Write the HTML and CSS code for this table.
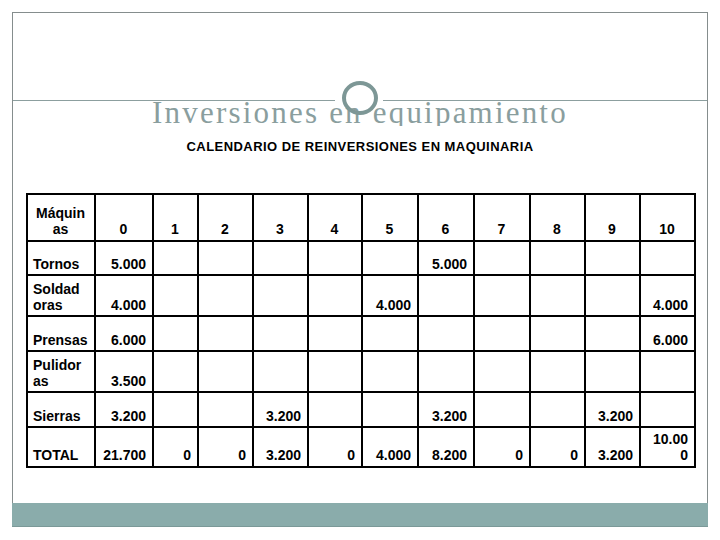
FILE: index.html
```html
<!DOCTYPE html>
<html lang="es">
<head>
<meta charset="utf-8">
<title>Inversiones en equipamiento</title>
<link rel="stylesheet" href="styles.css">
</head>
<body>
<div class="slide">
  <div class="top"></div>
  <div class="rule"><span class="seg seg-left"></span><span class="seg seg-right"></span></div>
  <div class="ring"></div>
  <h1 class="title">Inversiones en equipamiento</h1>
  <p class="subtitle">CALENDARIO DE REINVERSIONES EN MAQUINARIA</p>
  <table class="cal">
    <colgroup>
      <col style="width:68px"><col style="width:58px"><col style="width:45px"><col style="width:55px"><col style="width:55px"><col style="width:54px"><col style="width:56px"><col style="width:56px"><col style="width:56px"><col style="width:55px"><col style="width:55px"><col style="width:55px">
    </colgroup>
    <tr class="r-head">
      <th>Máquin<br>as</th><th>0</th><th>1</th><th>2</th><th>3</th><th>4</th><th>5</th><th>6</th><th>7</th><th>8</th><th>9</th><th>10</th>
    </tr>
    <tr class="r-34">
      <td class="name">Tornos</td><td>5.000</td><td></td><td></td><td></td><td></td><td></td><td>5.000</td><td></td><td></td><td></td><td></td>
    </tr>
    <tr class="r-41">
      <td class="name">Soldad<br>oras</td><td>4.000</td><td></td><td></td><td></td><td></td><td>4.000</td><td></td><td></td><td></td><td></td><td>4.000</td>
    </tr>
    <tr class="r-35">
      <td class="name">Prensas</td><td>6.000</td><td></td><td></td><td></td><td></td><td></td><td></td><td></td><td></td><td></td><td>6.000</td>
    </tr>
    <tr class="r-41">
      <td class="name">Pulidor<br>as</td><td>3.500</td><td></td><td></td><td></td><td></td><td></td><td></td><td></td><td></td><td></td><td></td>
    </tr>
    <tr class="r-35">
      <td class="name">Sierras</td><td>3.200</td><td></td><td></td><td>3.200</td><td></td><td></td><td>3.200</td><td></td><td></td><td>3.200</td><td></td>
    </tr>
    <tr class="r-total">
      <td class="name">TOTAL</td><td>21.700</td><td>0</td><td>0</td><td>3.200</td><td>0</td><td>4.000</td><td>8.200</td><td>0</td><td>0</td><td>3.200</td><td>10.00<br>0</td>
    </tr>
  </table>
</div>
<div class="footer"></div>
</body>
</html>
```

FILE: styles.css
```css
html, body {
  margin: 0;
  padding: 0;
  background: #ffffff;
}

body {
  width: 720px;
  height: 540px;
  overflow: hidden;
}

.slide {
  position: relative;
  box-sizing: border-box;
  width: 696px;
  height: 491px;
  margin: 12px 0 0 12px;
  border: 1px solid #858d8d;
  border-bottom: 0;
}

.top {
  height: 87px;
}

.rule {
  display: flex;
  gap: 48px;
  height: 1px;
}

.seg {
  display: block;
  height: 1px;
  background: #8c9f9f;
}

.seg-left {
  width: 322px;
}

.seg-right {
  flex: 1;
}

.ring {
  position: absolute;
  left: 329px;
  top: 68px;
  width: 36px;
  height: 34px;
  box-sizing: border-box;
  border: 4px solid #7d9796;
  border-radius: 50%;
}

.title {
  margin: 0;
  height: 25px;
  overflow: hidden;
  text-align: center;
  font-family: "Liberation Serif", "Times New Roman", serif;
  font-weight: normal;
  font-size: 31px;
  line-height: 23px;
  letter-spacing: 2.2px;
  color: #8a9e9e;
}

.subtitle {
  margin: 13px 0 0 0;
  height: 16px;
  text-align: center;
  font-family: "Liberation Sans", Arial, sans-serif;
  font-weight: bold;
  font-size: 13px;
  line-height: 16px;
  letter-spacing: 0.45px;
  color: #000000;
}

.cal {
  margin: 38px 0 0 13px;
  width: 668px;
  table-layout: fixed;
  border-collapse: collapse;
  font-family: "Liberation Sans", Arial, sans-serif;
  font-weight: bold;
  font-size: 14px;
  line-height: 16px;
  color: #000000;
}

.cal th,
.cal td {
  border: 2px solid #000000;
  padding: 0 6px 2px 5px;
  vertical-align: bottom;
  text-align: right;
  white-space: nowrap;
}

.cal th {
  text-align: center;
  font-weight: bold;
  padding-bottom: 3px;
}

.cal td.name {
  text-align: left;
}

.r-head { height: 47px; }
.r-34 { height: 34px; }
.r-41 { height: 41px; }
.r-35 { height: 35px; }
.r-total { height: 40px; }

.r-total td {
  padding-bottom: 3px;
}

.footer {
  margin-left: 12px;
  width: 696px;
  height: 24px;
  background: #8aacab;
  border-bottom: 1px solid #7b9998;
  box-sizing: border-box;
}
```
